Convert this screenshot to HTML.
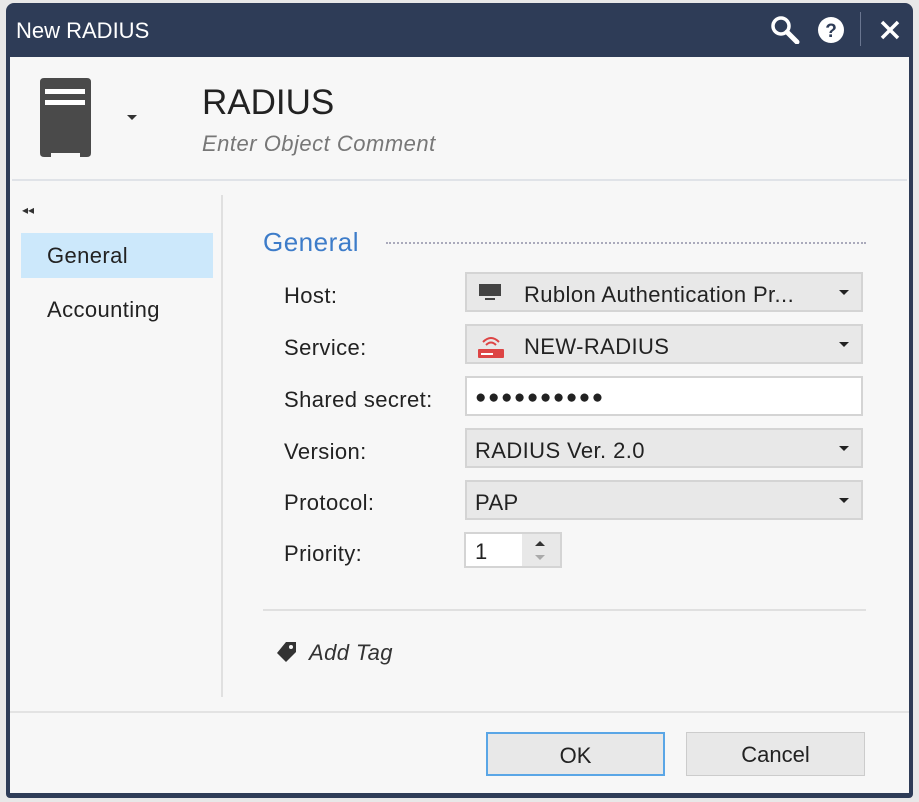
<!DOCTYPE html>
<html><head><style>
*{box-sizing:border-box;margin:0;padding:0}
body{width:919px;height:802px;background:#e8e8e8;font-family:"Liberation Sans",sans-serif;position:relative;overflow:hidden}
.win{position:absolute;left:6px;top:3px;width:907px;height:795px;background:#2e3c57;border-radius:8px 8px 4px 4px}
.body{position:absolute;left:10px;top:57px;width:899px;height:736px;background:#f7f7f7}
.title{position:absolute;left:16px;top:18px;color:#fff;font-size:22px}
.abs{position:absolute}
.lbl{position:absolute;left:284px;font-size:22px;letter-spacing:0.4px;color:#222}
.field{position:absolute;left:465px;width:398px;height:40px;background:#e8e8e8;border:2px solid #d4d4d4;font-size:22px;letter-spacing:0.4px;color:#222;padding:8px 0 0 8px}
.arr{position:absolute;right:12px;top:16px;width:0;height:0;border-left:5px solid transparent;border-right:5px solid transparent;border-top:5px solid #222}
.btn{position:absolute;top:732px;width:179px;height:44px;font-size:22px;color:#222;text-align:center;line-height:44px;background:#e8e8e8;border:1px solid #ccc}
</style></head><body>
<div class="win"></div>
<div class="title">New RADIUS</div>
<svg class="abs" style="left:768px;top:14px" width="34" height="30"><circle cx="13" cy="12" r="8" fill="none" stroke="#fff" stroke-width="3.5"/><line x1="19" y1="18" x2="29" y2="28" stroke="#fff" stroke-width="5" stroke-linecap="round"/></svg>
<svg class="abs" style="left:817px;top:16px" width="30" height="30"><circle cx="14" cy="14" r="13" fill="#fff"/><text x="14" y="21" text-anchor="middle" font-family="Liberation Sans" font-weight="bold" font-size="19" fill="#2e3c57">?</text></svg>
<div class="abs" style="left:860px;top:12px;width:1px;height:34px;background:#6a7690"></div>
<svg class="abs" style="left:879px;top:19px" width="22" height="22"><path d="M3 3L19 19M19 3L3 19" stroke="#fff" stroke-width="3.5"/></svg>
<div class="body"></div>
<svg class="abs" style="left:40px;top:78px" width="52" height="80"><path d="M3 0H47Q51 0 51 4V75Q51 79 47 79H40V75H11V79H4Q0 79 0 75V4Q0 0 4 0Z" fill="#4a4a4a"/><rect x="5" y="11" width="40" height="5" fill="#fff"/><rect x="5" y="22" width="40" height="5" fill="#fff"/></svg>
<div class="abs" style="left:127px;top:115px;border-left:5px solid transparent;border-right:5px solid transparent;border-top:5px solid #333"></div>
<div class="abs" style="left:202px;top:83px;font-size:35px;color:#222">RADIUS</div>
<div class="abs" style="left:202px;top:131px;font-size:22px;letter-spacing:0.5px;color:#777;font-style:italic">Enter Object Comment</div>
<div class="abs" style="left:12px;top:179px;width:895px;height:2px;background:#e0e3e8"></div>
<div class="abs" style="left:22px;top:203px;font-size:12px;color:#333">◂◂</div>
<div class="abs" style="left:21px;top:233px;width:192px;height:45px;background:#cce8fb"></div>
<div class="abs" style="left:47px;top:243px;font-size:22px;letter-spacing:0.4px;color:#222">General</div>
<div class="abs" style="left:47px;top:297px;font-size:22px;letter-spacing:0.4px;color:#222">Accounting</div>
<div class="abs" style="left:221px;top:195px;width:2px;height:502px;background:#e0e0e0"></div>
<div class="abs" style="left:263px;top:227px;font-size:26px;letter-spacing:0.5px;color:#3d7cc9">General</div>
<div class="abs" style="left:386px;top:242px;width:480px;border-top:2px dotted #aab"></div>
<div class="lbl" style="top:283px">Host:</div>
<div class="lbl" style="top:335px">Service:</div>
<div class="lbl" style="top:387px">Shared secret:</div>
<div class="lbl" style="top:439px">Version:</div>
<div class="lbl" style="top:490px">Protocol:</div>
<div class="lbl" style="top:541px">Priority:</div>
<div class="field" style="top:272px;padding-left:57px">Rublon Authentication Pr...<div class="arr"></div>
<svg class="abs" style="left:10px;top:9px" width="26" height="20"><rect x="2" y="1" width="22" height="12" fill="#444"/><rect x="8" y="15" width="10" height="2" fill="#444"/></svg></div>
<div class="field" style="top:324px;padding-left:57px">NEW-RADIUS<div class="arr"></div>
<svg class="abs" style="left:10px;top:6px" width="28" height="28"><path d="M6 10Q14 2 22 10M9 13Q14 8 19 13" stroke="#d44" stroke-width="2" fill="none"/><rect x="1" y="17" width="26" height="9" rx="1" fill="#d44"/><rect x="4" y="21" width="12" height="2" fill="#fff"/></svg></div>
<div class="field" style="top:376px;background:#fff;font-size:19px;padding-top:9px;letter-spacing:1.5px">●●●●●●●●●●</div>
<div class="field" style="top:428px">RADIUS Ver. 2.0<div class="arr"></div></div>
<div class="field" style="top:480px">PAP<div class="arr"></div></div>
<div class="abs" style="left:464px;top:532px;width:98px;height:36px;border:2px solid #d4d4d4;background:#fff"></div>
<div class="abs" style="left:522px;top:534px;width:38px;height:32px;background:#e8e8e8"></div>
<div class="abs" style="left:535px;top:541px;border-left:5px solid transparent;border-right:5px solid transparent;border-bottom:5px solid #333"></div>
<div class="abs" style="left:535px;top:555px;border-left:5px solid transparent;border-right:5px solid transparent;border-top:5px solid #aaa"></div>
<div class="abs" style="left:475px;top:539px;font-size:22px;color:#222">1</div>
<div class="abs" style="left:263px;top:609px;width:603px;height:2px;background:#e0e0e0"></div>
<svg class="abs" style="left:276px;top:641px" width="22" height="22"><path d="M10 1H20V11L10 21L1 12Z" fill="#333"/><circle cx="15" cy="6" r="2" fill="#f7f7f7"/></svg>
<div class="abs" style="left:309px;top:640px;font-size:22px;letter-spacing:0.4px;color:#333;font-style:italic">Add Tag</div>
<div class="abs" style="left:10px;top:711px;width:899px;height:2px;background:#e3e3e3"></div>
<div class="btn" style="left:486px;border:2px solid #5aa6e6">OK</div>
<div class="btn" style="left:686px">Cancel</div>
</body></html>
